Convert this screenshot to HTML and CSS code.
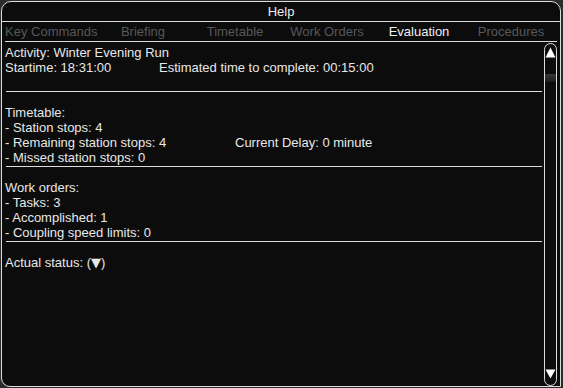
FILE: index.html
```html
<!DOCTYPE html>
<html>
<head>
<meta charset="utf-8">
<link rel="stylesheet" href="styles.css">
</head>
<body>
<div class="window">
  <div class="title">Help</div>
  <div class="tabs">
    <div class="tab">Key Commands</div>
    <div class="tab">Briefing</div>
    <div class="tab">Timetable</div>
    <div class="tab">Work Orders</div>
    <div class="tab active">Evaluation</div>
    <div class="tab">Procedures</div>
  </div>
  <div class="body">
    <div class="content">
      <div class="row">Activity: Winter Evening Run</div>
      <div class="row"><span class="col-a">Startime: 18:31:00</span><span>Estimated time to complete: 00:15:00</span></div>
      <div class="row"></div>
      <div class="sep"></div>
      <div class="row">Timetable:</div>
      <div class="row">- Station stops: 4</div>
      <div class="row"><span class="col-b">- Remaining station stops: 4</span><span>Current Delay: 0 minute</span></div>
      <div class="row">- Missed station stops: 0</div>
      <div class="sep"></div>
      <div class="row">Work orders:</div>
      <div class="row">- Tasks: 3</div>
      <div class="row">- Accomplished: 1</div>
      <div class="row">- Coupling speed limits: 0</div>
      <div class="sep"></div>
      <div class="row">Actual status: (<span class="tri">▼</span>)</div>
    </div>
    <div class="scrollbar">
      <svg class="arrow up" width="11" height="11" viewBox="0 0 11 11"><polygon points="5.5,0.5 10.5,10.5 0.5,10.5" fill="#fff"/></svg>
      <div class="thumb"></div>
      <div class="track"></div>
      <svg class="arrow down" width="11" height="10" viewBox="0 0 11 10"><polygon points="0.5,0.5 10.5,0.5 5.5,9.5" fill="#fff"/></svg>
    </div>
  </div>
</div>
</body>
</html>
```
FILE: styles.css
```css
html, body {
  margin: 0;
  padding: 0;
}
body {
  background: #2c2c2c;
  width: 563px;
  height: 388px;
  overflow: hidden;
  font-family: "Liberation Sans", Arial, sans-serif;
  font-size: 13px;
  color: #e8e8e8;
}
.window {
  margin: 1px;
  width: 560px;
  height: 386px;
  box-sizing: border-box;
  border: 1px solid #dcdcdc;
  border-radius: 10px 10px 0 9px;
  background: #0c0c0c;
  display: flex;
  flex-direction: column;
}
.title {
  height: 19px;
  line-height: 19px;
  text-align: center;
  border-bottom: 1px solid #dcdcdc;
  color: #ececec;
}
.tabs {
  display: grid;
  grid-template-columns: repeat(6, minmax(0, 1fr));
  margin: 0 3px;
  height: 18px;
  line-height: 18px;
  padding-top: 1px;
  border-bottom: 1px solid #dcdcdc;
}
.tab {
  text-align: center;
  color: #585858;
  white-space: nowrap;
}
.tab.active {
  color: #f0f0f0;
}
.body {
  flex: 1;
  display: flex;
  min-height: 0;
}
.content {
  flex: 1;
  padding: 3px 1px 0 3px;
}
.row {
  height: 15px;
  line-height: 15px;
  white-space: nowrap;
}
.col-a {
  display: inline-block;
  width: 154px;
}
.col-b {
  display: inline-block;
  width: 230px;
}
.sep {
  height: 14px;
  margin-top: 1px;
  margin-left: 1px;
  border-top: 1px solid #dcdcdc;
  box-sizing: border-box;
}
.tri {
  font-family: "DejaVu Sans", sans-serif;
  font-size: 13px;
}
.scrollbar {
  width: 13px;
  margin: 1px 3px 0 1px;
  box-sizing: border-box;
  border: 1px solid #dcdcdc;
  border-radius: 7px;
  display: flex;
  flex-direction: column;
  align-items: center;
  background: #0c0c0c;
}
.arrow {
  display: block;
  flex: none;
}
.arrow.up {
  margin-top: 3px;
}
.arrow.down {
  margin-bottom: 6px;
}
.thumb {
  width: 11px;
  height: 8px;
  margin-top: 16px;
  background: linear-gradient(#3a3a3a, #1a1a1a);
}
.track {
  flex: 1;
}
```
